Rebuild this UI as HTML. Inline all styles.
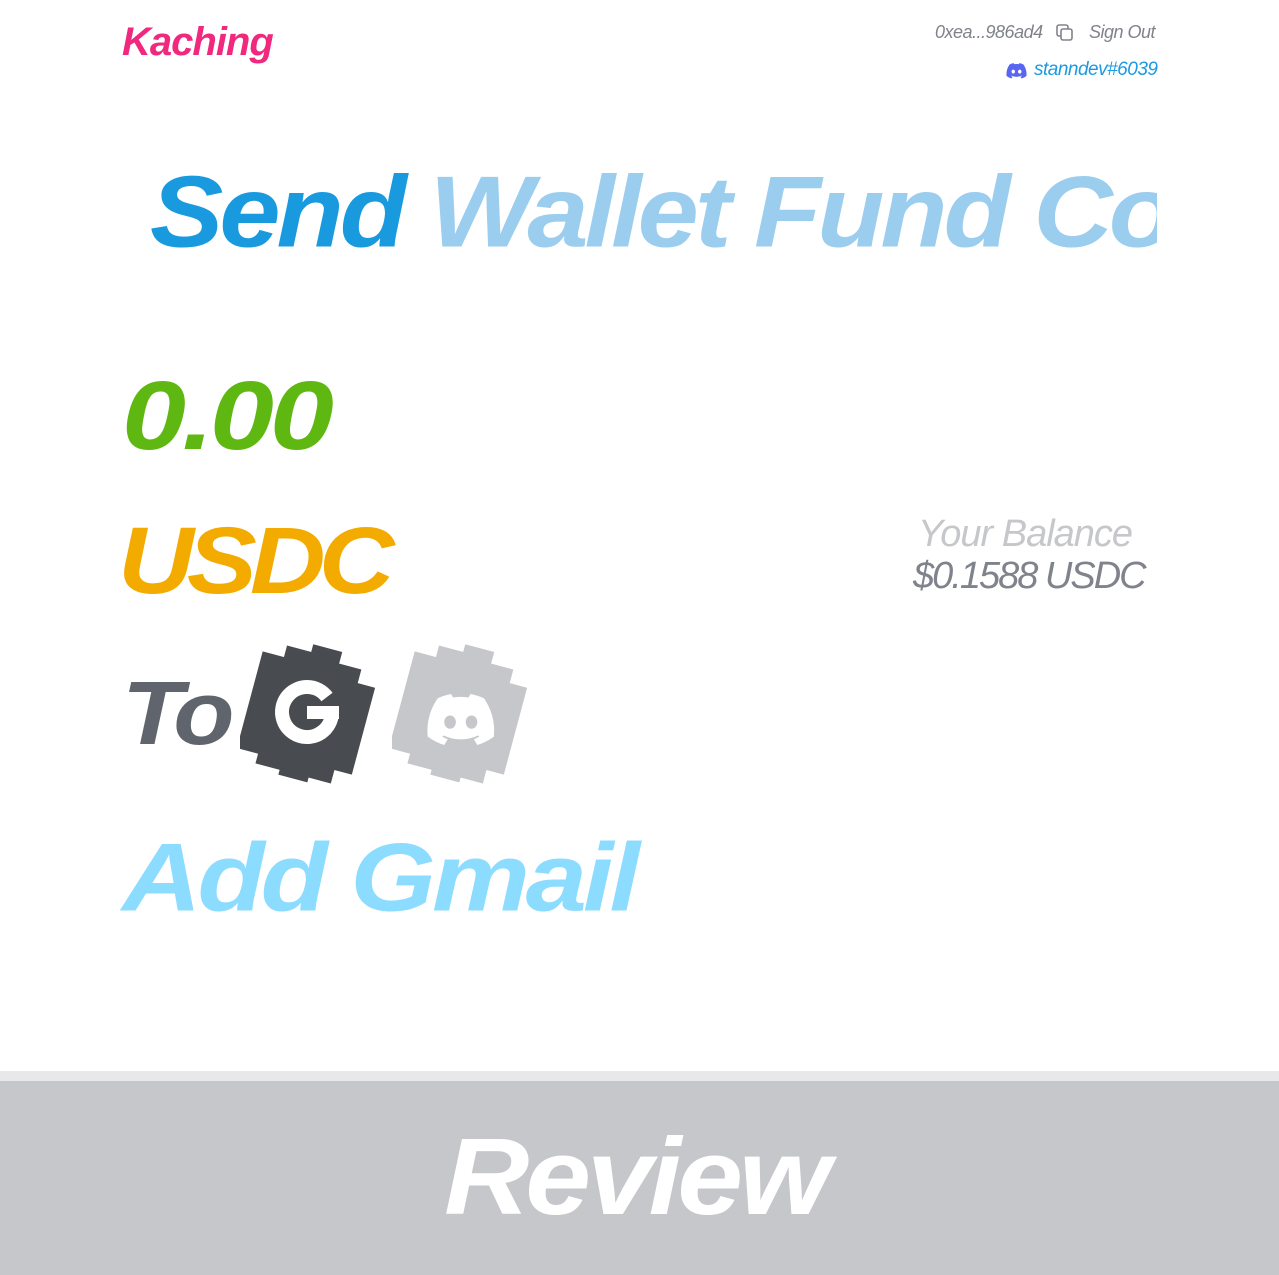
<!DOCTYPE html>
<html><head><meta charset="utf-8"><style>
html,body{margin:0;padding:0;background:#fff;}
body{width:1279px;height:1275px;position:relative;overflow:hidden;font-family:"Liberation Sans",sans-serif;font-style:italic;font-weight:bold;}
.a{position:absolute;white-space:nowrap;line-height:1;}
</style></head><body>
<div class="a" style="left:122px;top:22px;font-size:40px;color:#f0287e;letter-spacing:-1px;">Kaching</div>
<div class="a" style="left:935px;top:23px;font-size:18px;color:#80838c;font-weight:normal;letter-spacing:-0.5px;">0xea...986ad4</div>
<svg class="a" style="left:1055px;top:23px" width="20" height="20" viewBox="0 0 20 20"><rect x="2" y="2" width="11" height="11" rx="2" fill="none" stroke="#80838c" stroke-width="1.6"/><rect x="6" y="6" width="11" height="11" rx="2" fill="#fff" stroke="#80838c" stroke-width="1.6"/></svg>
<div class="a" style="left:1089px;top:23px;font-size:18px;color:#80838c;font-weight:normal;letter-spacing:-0.5px;">Sign Out</div>
<svg class="a" style="left:1006px;top:63px" width="21" height="16" viewBox="0 0 24 18"><path fill="#5865f2" d="M20 1.5A19 19 0 0 0 15.3 0l-.6 1.2a17 17 0 0 0-5.4 0L8.7 0A19 19 0 0 0 4 1.5C1 6 .2 10.4.6 14.7A19 19 0 0 0 6.3 17.6l1.2-2a12 12 0 0 1-1.9-.9l.5-.4a13.6 13.6 0 0 0 11.8 0l.5.4a12 12 0 0 1-1.9.9l1.2 2a19 19 0 0 0 5.7-2.9c.5-5-.8-9.4-3.4-13.2zM8.3 12c-1.1 0-2-1-2-2.3s.9-2.3 2-2.3 2 1 2 2.3-.9 2.3-2 2.3zm7.4 0c-1.1 0-2-1-2-2.3s.9-2.3 2-2.3 2 1 2 2.3-.9 2.3-2 2.3z"/></svg>
<div class="a" style="left:1034px;top:60px;font-size:19px;color:#1c9ae0;font-weight:normal;letter-spacing:-0.5px;">stanndev#6039</div>

<div class="a" style="left:122px;top:154px;width:1035px;overflow:hidden;font-size:110px;letter-spacing:-4px;height:120px;transform:scaleY(0.92);transform-origin:0 100px;">
<span style="color:#1a9ade;margin-left:28px;">Send</span> <span style="color:#9acdee;">Wallet Fund Connect</span></div>

<div class="a" style="left:122px;top:354px;font-size:115px;color:#5fb812;letter-spacing:-4px;transform:scaleY(0.85);transform-origin:0 90px;">0.00</div>
<div class="a" style="left:118px;top:505px;font-size:105px;color:#f4ab00;letter-spacing:-7px;transform:scaleY(0.9);transform-origin:0 90px;">USDC</div>
<div class="a" style="left:122px;top:660px;font-size:100px;color:#60646d;letter-spacing:-6px;transform:scaleY(0.9);transform-origin:0 85px;">To</div>

<svg class="a" style="left:240px;top:643px" width="135" height="142" viewBox="0 0 135 142">
<g fill="#484b50" transform="rotate(15 67 71)"><rect x="8" y="22" width="30" height="100"/><rect x="30" y="10" width="32" height="122"/><rect x="55" y="2" width="30" height="135"/><rect x="78" y="14" width="30" height="118"/><rect x="100" y="28" width="26" height="90"/></g>
<path d="M87 54A25 25 0 1 0 92 70" fill="none" stroke="#fff" stroke-width="14"/><rect x="67" y="63" width="32" height="13" fill="#fff"/></svg>
<svg class="a" style="left:392px;top:643px" width="135" height="142" viewBox="0 0 135 142">
<g fill="#c6c7cb" transform="rotate(15 67 71)"><rect x="8" y="22" width="30" height="100"/><rect x="30" y="10" width="32" height="122"/><rect x="55" y="2" width="30" height="135"/><rect x="78" y="14" width="30" height="118"/><rect x="100" y="28" width="26" height="90"/></g>
<g transform="translate(34 51) scale(2.9)"><path fill="#fff" d="M20 1.5A19 19 0 0 0 15.3 0l-.6 1.2a17 17 0 0 0-5.4 0L8.7 0A19 19 0 0 0 4 1.5C1 6 .2 10.4.6 14.7A19 19 0 0 0 6.3 17.6l1.2-2a12 12 0 0 1-1.9-.9l.5-.4a13.6 13.6 0 0 0 11.8 0l.5.4a12 12 0 0 1-1.9.9l1.2 2a19 19 0 0 0 5.7-2.9c.5-5-.8-9.4-3.4-13.2zM8.3 12c-1.1 0-2-1-2-2.3s.9-2.3 2-2.3 2 1 2 2.3-.9 2.3-2 2.3zm7.4 0c-1.1 0-2-1-2-2.3s.9-2.3 2-2.3 2 1 2 2.3-.9 2.3-2 2.3z"/></g></svg>

<div class="a" style="left:122px;top:818px;font-size:110px;color:#8cdcff;letter-spacing:-4px;transform:scaleY(0.88);transform-origin:0 95px;">Add Gmail</div>

<div class="a" style="left:918px;top:515px;font-size:38px;color:#c6c7cb;font-weight:normal;letter-spacing:-1px;">Your Balance</div>
<div class="a" style="left:913px;top:557px;font-size:38px;color:#80838c;font-weight:normal;letter-spacing:-2px;">$0.1588 USDC</div>

<div class="a" style="left:0;top:1071px;width:1279px;height:10px;background:#e8e8ea;"></div>
<div class="a" style="left:0;top:1081px;width:1279px;height:194px;background:#c6c7cb;"></div>
<div class="a" style="left:-4px;top:1115px;width:1279px;text-align:center;font-size:118px;color:#fff;letter-spacing:-4px;transform:scaleY(0.92);transform-origin:0 100px;">Review</div>
</body></html>
